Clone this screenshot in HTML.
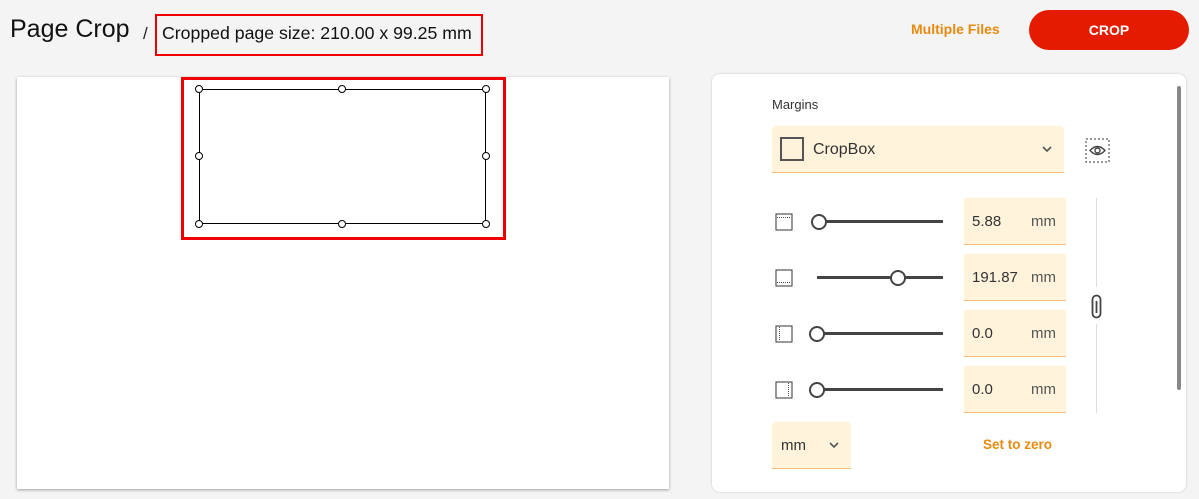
<!DOCTYPE html>
<html><head><style>
*{margin:0;padding:0;box-sizing:border-box}
body{width:1199px;height:499px;background:#f4f4f4;font-family:"Liberation Sans",Roboto,sans-serif;position:relative;overflow:hidden;color:#222}
.a{position:absolute}
.card{left:17px;top:77px;width:652px;height:412px;background:#fff;box-shadow:0 1px 3px rgba(0,0,0,.35)}
.panel{left:712px;top:74px;width:474px;height:418px;background:#fff;border-radius:8px;box-shadow:0 0 2px rgba(0,0,0,.2)}
.inp{width:102px;height:47px;background:#fff3dc;border-bottom:1px solid #f0c078}
.inp span{position:absolute;top:15px;font-size:15px;color:#333}
.track{height:3px;background:#444}
.thumb{width:16px;height:16px;border:2px solid #444;border-radius:50%;background:#fff}
.h{width:8px;height:8px;border:1px solid #000;border-radius:50%;background:#fff}
</style></head><body>
<div class="a" style="left:10px;top:15px;font-size:25px;color:#111">Page Crop</div>
<div class="a" style="left:143px;top:24px;font-size:17px">/</div>
<div class="a" style="left:155px;top:14px;width:328px;height:42px;border:2px solid #e00"></div>
<div class="a" style="left:162px;top:23px;font-size:17.7px;color:#111">Cropped page size: 210.00 x 99.25 mm</div>
<div class="a" style="left:911px;top:21px;font-size:14px;font-weight:bold;color:#e88a10">Multiple Files</div>
<div class="a" style="left:1029px;top:10px;width:160px;height:40px;border-radius:20px;background:#e51b00;color:#fff;font-weight:bold;font-size:14px;text-align:center;line-height:40px">CROP</div>

<div class="a card"></div>
<div class="a" style="left:181px;top:77px;width:325px;height:163px;border:3px solid #e00"></div>
<div class="a" style="left:199px;top:89px;width:287px;height:135px;border:1px solid #000"></div>
<div class="a h" style="left:195px;top:85px"></div><div class="a h" style="left:338px;top:85px"></div><div class="a h" style="left:482px;top:85px"></div>
<div class="a h" style="left:195px;top:152px"></div><div class="a h" style="left:482px;top:152px"></div>
<div class="a h" style="left:195px;top:220px"></div><div class="a h" style="left:338px;top:220px"></div><div class="a h" style="left:482px;top:220px"></div>

<div class="a panel"></div>
<div class="a" style="left:1177px;top:86px;width:4px;height:304px;background:#888;border-radius:2px"></div>
<div class="a" style="left:772px;top:97px;font-size:13px;color:#333">Margins</div>
<div class="a inp" style="left:772px;top:126px;width:292px;border-radius:4px 4px 0 0"><div class="a" style="left:8px;top:11px;width:24px;height:24px;border:2px solid #555"></div><span style="left:41px;top:15px;font-size:16px">CropBox</span>
<svg class="a" style="left:270px;top:19px" width="10" height="8"><path d="M1 2l4 4 4-4" stroke="#555" stroke-width="1.6" fill="none"/></svg></div>
<svg class="a" style="left:1085px;top:138px" width="25" height="25"><rect x="1" y="1" width="23" height="23" fill="none" stroke="#333" stroke-dasharray="2 2"/><path d="M5 12.5q7.5-8 15 0q-7.5 8-15 0z" fill="none" stroke="#444" stroke-width="1.4"/><circle cx="12.5" cy="12.5" r="2.5" fill="none" stroke="#444" stroke-width="1.4"/></svg>

<svg class="a" style="left:775px;top:213px" width="18" height="18"><rect x="1" y="1" width="16" height="16" fill="none" stroke="#555" stroke-width="1.2"/><path d="M2 4.5h14" stroke="#555" stroke-dasharray="1 1"/></svg>
<div class="a track" style="left:825px;top:220px;width:118px"></div><div class="a thumb" style="left:811px;top:214px"></div>
<div class="a inp" style="left:964px;top:198px"><span style="left:8px">5.88</span><span style="left:67px;color:#555">mm</span></div>

<svg class="a" style="left:775px;top:269px" width="18" height="18"><rect x="1" y="1" width="16" height="16" fill="none" stroke="#555" stroke-width="1.2"/><path d="M2 13.5h14" stroke="#555" stroke-dasharray="1 1"/></svg>
<div class="a track" style="left:817px;top:276px;width:126px"></div><div class="a thumb" style="left:890px;top:270px"></div>
<div class="a inp" style="left:964px;top:254px"><span style="left:8px">191.87</span><span style="left:67px;color:#555">mm</span></div>

<svg class="a" style="left:775px;top:325px" width="18" height="18"><rect x="1" y="1" width="16" height="16" fill="none" stroke="#555" stroke-width="1.2"/><path d="M4.5 2v14" stroke="#555" stroke-dasharray="1 1"/></svg>
<div class="a track" style="left:823px;top:332px;width:120px"></div><div class="a thumb" style="left:809px;top:326px"></div>
<div class="a inp" style="left:964px;top:310px"><span style="left:8px">0.0</span><span style="left:67px;color:#555">mm</span></div>

<svg class="a" style="left:775px;top:381px" width="18" height="18"><rect x="1" y="1" width="16" height="16" fill="none" stroke="#555" stroke-width="1.2"/><path d="M13.5 2v14" stroke="#555" stroke-dasharray="1 1"/></svg>
<div class="a track" style="left:823px;top:388px;width:120px"></div><div class="a thumb" style="left:809px;top:382px"></div>
<div class="a inp" style="left:964px;top:366px"><span style="left:8px">0.0</span><span style="left:67px;color:#555">mm</span></div>

<div class="a" style="left:1096px;top:198px;width:1px;height:89px;background:#ddd"></div>
<div class="a" style="left:1096px;top:324px;width:1px;height:89px;background:#ddd"></div>
<svg class="a" style="left:1090px;top:294px" width="14" height="26"><rect x="2.5" y="1.5" width="8" height="22" rx="4" fill="none" stroke="#444" stroke-width="1.8"/><path d="M6.5 7v12" stroke="#444" stroke-width="1.8"/></svg>

<div class="a inp" style="left:772px;top:422px;width:79px;border-radius:4px 4px 0 0"><span style="left:9px;top:15px">mm</span>
<svg class="a" style="left:57px;top:19px" width="10" height="8"><path d="M1 2l4 4 4-4" stroke="#555" stroke-width="1.6" fill="none"/></svg></div>
<div class="a" style="left:983px;top:437px;font-size:13.5px;font-weight:bold;color:#e88a10">Set to zero</div>
</body></html>
